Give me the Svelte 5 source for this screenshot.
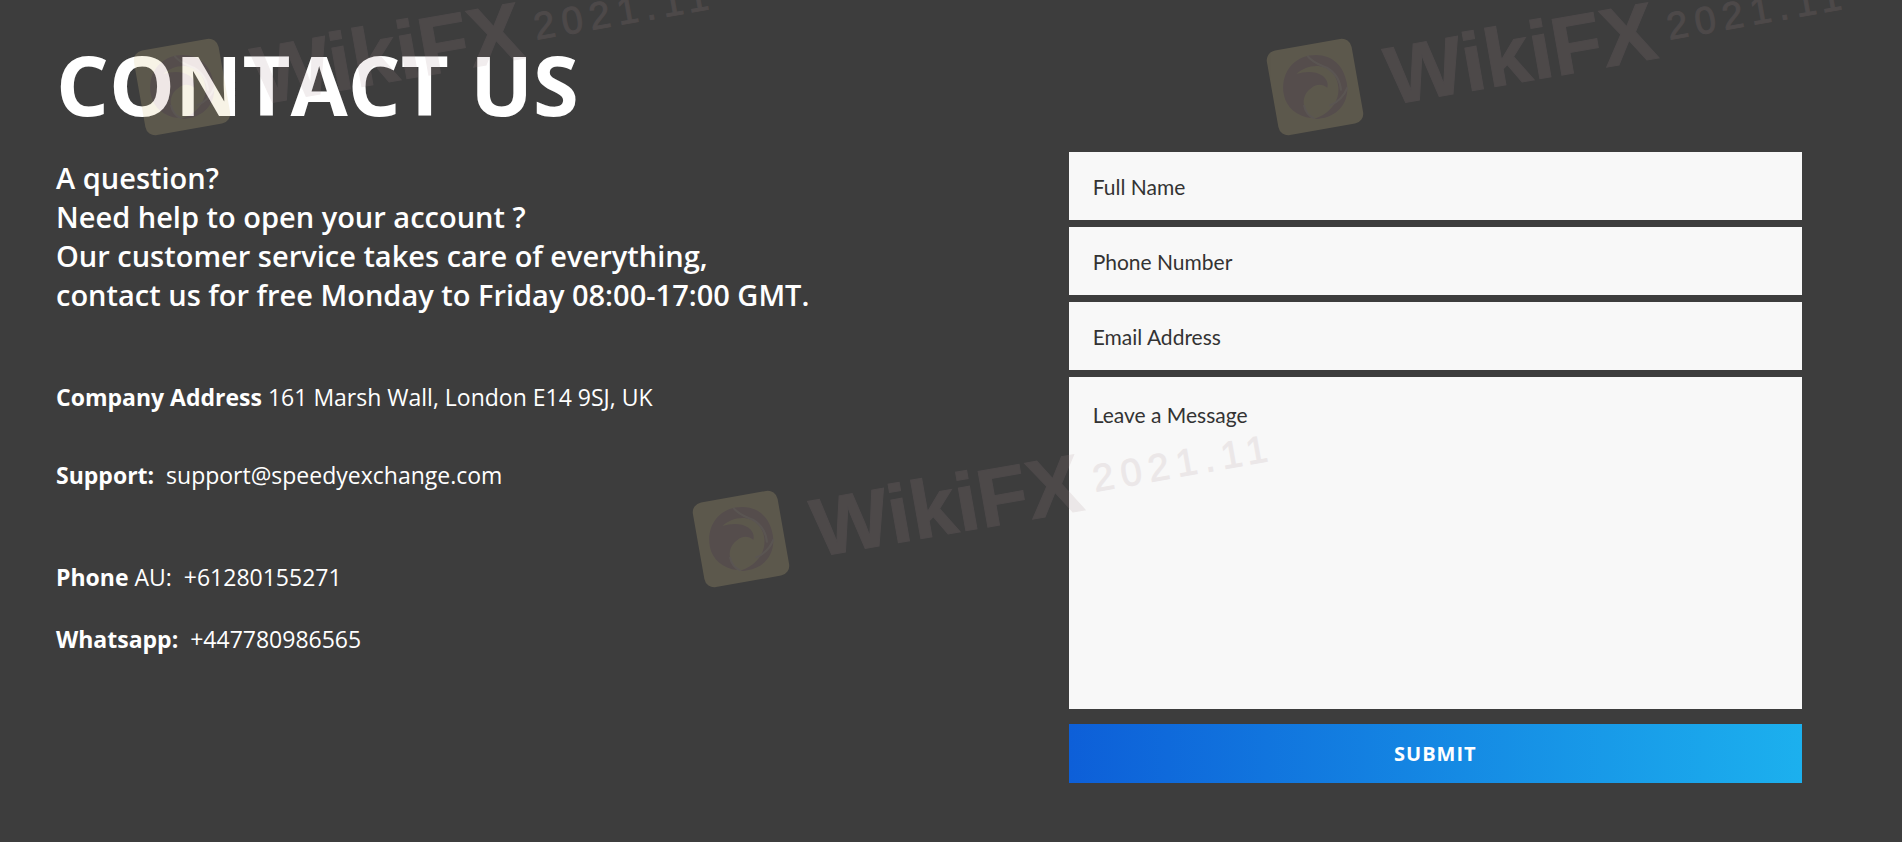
<script lang="ts">
	interface Field {
		name: string;
		type: string;
		label: string;
	}

	const fields: Field[] = [
		{ name: 'full-name', type: 'text', label: 'Full Name' },
		{ name: 'phone', type: 'tel', label: 'Phone Number' },
		{ name: 'email', type: 'email', label: 'Email Address' }
	];

	// centre of each stamp's badge
	const stamps = [
		{ x: 182, y: 87 },
		{ x: 1315, y: 87 },
		{ x: 741, y: 539 }
	];

	let values = $state<Record<string, string>>({ 'full-name': '', phone: '', email: '' });
	let message = $state('');

	function handleSubmit(e: SubmitEvent) {
		e.preventDefault();
	}
</script>

<section class="contact">
	<div class="info">
		<h1 class="title">CONTACT US</h1>
		<p class="intro">
			A question?<br />
			Need help to open your account ?<br />
			Our customer service takes care of everything,<br />
			contact us for free Monday to Friday 08:00-17:00 GMT.
		</p>
		<address class="details">
			<p class="address"><strong>Company Address</strong> 161 Marsh Wall, London E14 9SJ, UK</p>
			<p class="support">
				<strong>Support:</strong>&nbsp;
				<a href="mailto:support@speedyexchange.com">support@speedyexchange.com</a>
			</p>
			<p class="phone"><strong>Phone</strong> AU:&nbsp; <a href="tel:+61280155271">+61280155271</a></p>
			<p><strong>Whatsapp:</strong>&nbsp; <a href="tel:+447780986565">+447780986565</a></p>
		</address>
	</div>

	<form class="form" onsubmit={handleSubmit}>
		{#each fields as field (field.name)}
			<input
				class="input"
				type={field.type}
				name={field.name}
				placeholder={field.label}
				aria-label={field.label}
				bind:value={values[field.name]}
			/>
		{/each}
		<textarea
			class="input message"
			name="message"
			placeholder="Leave a Message"
			aria-label="Leave a Message"
			bind:value={message}
		></textarea>
		<button class="submit" type="submit">SUBMIT</button>
	</form>

	<svg class="stamps" aria-hidden="true">
		{#each stamps as { x, y }}
			<g transform="translate({x} {y}) rotate(-10)">
				<g class="badge">
					<rect x="-43" y="-43" width="86" height="86" rx="10" />
					<path
						class="swirl"
						d="M-32 2C-32-18-18-32 0-32C20-32 32-18 32 1C32 20 19 32 1 32C-2 32-4 32-6 31C10 29 22 18 23 4C24-8 17-17 7-20C-2-22-10-20-16-16C-8-17 3-16 9-10C13-6 14-1 12 3C8-2 2-3-3 0C-10 3-14 9-14 16C-14 22-12 26-9 30C-23 26-32 15-32 2Z"
					/>
					<path class="glint" d="M-2-32C2-24 9-21 15-17C22-11 26-3 25 8M-14 16C-14 22-12 27-6 31M32 6C27 14 20 19 11 21" />
				</g>
				<text class="brand" x="72" y="31">WikiFX</text>
				<text class="date" x="357" y="15">2021.11</text>
			</g>
		{/each}
	</svg>
</section>

<style>
	:global(body) {
		margin: 0;
		background: #3d3d3d;
	}

	.contact {
		position: relative;
		display: grid;
		grid-template-columns: 58fr 42fr;
		box-sizing: border-box;
		min-height: 100vh;
		padding: 30px 100px 56px 56px;
		background: #3d3d3d;
		color: #fff;
		font-family: 'Open Sans', sans-serif;
		overflow: hidden;
	}

	.title {
		margin: 0 0 20px;
		font-size: 83px;
		font-weight: 700;
		line-height: 108px;
	}

	.intro {
		margin: 0 0 63px;
		font-size: 29px;
		font-weight: 600;
		line-height: 39px;
	}

	.details {
		font-size: 23px;
		font-style: normal;
		line-height: 40px;
	}

	.details p {
		margin: 0;
	}

	.details .address {
		margin-bottom: 38px;
	}

	.details .support {
		margin-bottom: 62px;
	}

	.details .phone {
		margin-bottom: 22px;
	}

	.details a {
		color: inherit;
		text-decoration: none;
	}

	.form {
		display: flex;
		flex-direction: column;
		gap: 7px;
		padding-top: 122px;
	}

	.input {
		box-sizing: border-box;
		width: 100%;
		height: 68px;
		padding: 0 24px;
		border: 0;
		border-radius: 0;
		background: #f8f8f8;
		color: #333;
		font-family: Lato, sans-serif;
		font-size: 21px;
		line-height: 28px;
	}

	.input::placeholder {
		color: #333;
		opacity: 1;
	}

	.message {
		height: 332px;
		padding: 24px;
		resize: none;
	}

	.submit {
		height: 59px;
		margin-top: 8px;
		border: 0;
		background: linear-gradient(90deg, #0d5fd8, #1cb0ee);
		color: #fff;
		font-family: 'Open Sans', sans-serif;
		font-size: 20px;
		font-weight: 700;
		letter-spacing: 1px;
		cursor: pointer;
	}

	.stamps {
		position: absolute;
		inset: 0;
		width: 100%;
		height: 100%;
		pointer-events: none;
	}

	.badge {
		fill: #d8c488;
		opacity: 0.2;
	}

	.swirl {
		fill: #b48c88;
	}

	.glint {
		fill: none;
		stroke: #d0b8a8;
		stroke-width: 2;
	}

	.brand,
	.date {
		fill: #a88c90;
		stroke: #a88c90;
		stroke-width: 1px;
		opacity: 0.15;
		font-family: 'Liberation Sans', sans-serif;
	}

	.brand {
		font-size: 82px;
		font-weight: 700;
	}

	.date {
		font-size: 38px;
		letter-spacing: 7px;
	}
</style>
